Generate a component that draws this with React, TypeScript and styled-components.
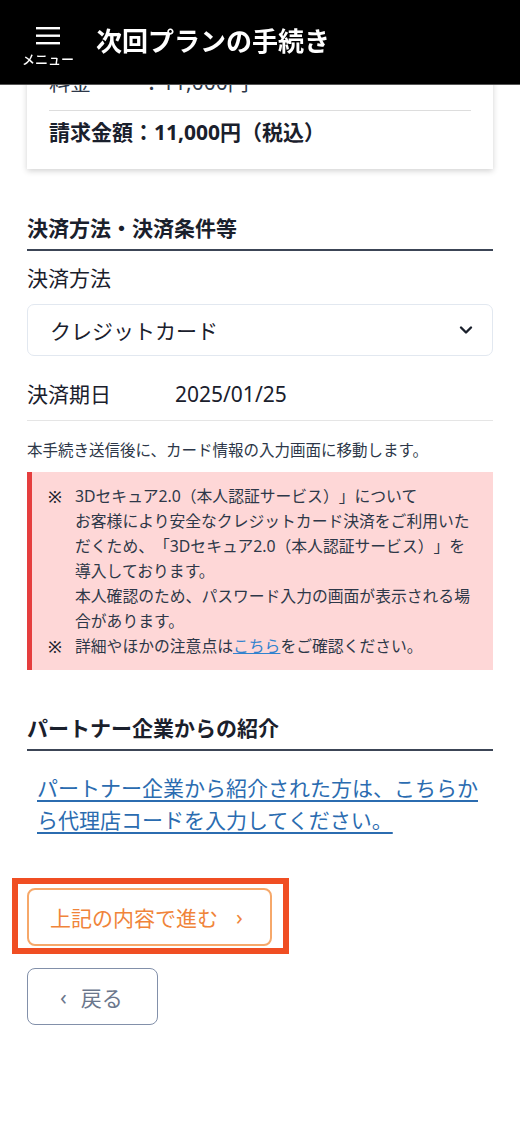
import React from "react";
import styled, { createGlobalStyle } from "styled-components";

const GlobalStyle = createGlobalStyle`
    * {
        box-sizing: border-box;
    }
    body {
        margin: 0;
        background: #ffffff;
        color: #1a202c;
        font-family: "Noto Sans", "Noto Sans CJK JP", sans-serif;
        text-spacing-trim: space-all;
    }
`;

const MenuIcon = () => (
    <svg width="26" height="18" viewBox="0 0 26 18" fill="none">
        <rect x="1" y="0" width="24" height="2.4" fill="#ffffff" />
        <rect x="1" y="7.5" width="24" height="2.4" fill="#ffffff" />
        <rect x="1" y="15" width="24" height="2.4" fill="#ffffff" />
    </svg>
);

const ChevronDown = () => (
    <svg width="14" height="10" viewBox="0 0 14 10" fill="none">
        <path d="M2 2.5 L7 7.5 L12 2.5" stroke="#1a202c" strokeWidth="2.4" strokeLinecap="round" strokeLinejoin="round" />
    </svg>
);

const App = () => {
    return (
        <>
            <GlobalStyle />
            <Header>
                <MenuButton>
                    <MenuIcon />
                    <MenuLabel>メニュー</MenuLabel>
                </MenuButton>
                <Title>次回プランの手続き</Title>
            </Header>

            <Main>
                <Card>
                    <PriceRow>
                        <PriceLabel>料金</PriceLabel>
                        <span>：11,000円</span>
                    </PriceRow>
                    <TotalRow>請求金額：11,000円（税込）</TotalRow>
                </Card>

                <SectionHeading gap={43}>決済方法・決済条件等</SectionHeading>
                <FieldLabel>決済方法</FieldLabel>
                <Select>
                    <span>クレジットカード</span>
                    <ChevronDown />
                </Select>
                <DateRow>
                    <DateLabel>決済期日</DateLabel>
                    <span>2025/01/25</span>
                </DateRow>
                <Note>本手続き送信後に、カード情報の入力画面に移動します。</Note>

                <Alert>
                    <Mark>※</Mark>
                    <AlertBody>
                        <p>3Dセキュア2.0（本人認証サービス）」について</p>
                        <p>お客様により安全なクレジットカード決済をご利用いただくため、「3Dセキュア2.0（本人認証サービス）」を導入しております。</p>
                        <p>本人確認のため、パスワード入力の画面が表示される場合があります。</p>
                    </AlertBody>
                    <Mark>※</Mark>
                    <AlertBody>
                        <p>詳細やほかの注意点は<AlertLink href="#">こちら</AlertLink>をご確認ください。</p>
                    </AlertBody>
                </Alert>

                <SectionHeading gap={42}>パートナー企業からの紹介</SectionHeading>
                <PartnerLink href="#">パートナー企業から紹介された方は、こちらから代理店コードを入力してください。</PartnerLink>

                <Highlight>
                    <NextButton>
                        上記の内容で進む<Arrow>›</Arrow>
                    </NextButton>
                </Highlight>
                <BackButton>
                    <Arrow>‹</Arrow>戻る
                </BackButton>
            </Main>
        </>
    );
};

const Header = styled.header`
    position: fixed;
    top: 0;
    left: 0;
    right: 0;
    height: 84px;
    background: #000000;
    display: flex;
    align-items: center;
    padding-left: 22px;
    z-index: 10;
    box-shadow: 0 1px 0 #555;
`;

const MenuButton = styled.div`
    display: flex;
    flex-direction: column;
    align-items: center;
    width: 52px;
    padding-top: 10px;
`;

const MenuLabel = styled.span`
    color: #ffffff;
    font-size: 13px;
    line-height: 16px;
    margin-top: 6px;
    font-weight: 500;
`;

const Title = styled.h1`
    margin: 0 0 0 22px;
    color: #ffffff;
    font-size: 26px;
    font-weight: 700;
    line-height: 34px;
    padding-bottom: 2px;
`;

const Main = styled.main`
    padding: 46px 27px 100px;
    display: flex;
    flex-direction: column;
    align-items: flex-start;
`;

const Card = styled.div`
    align-self: stretch;
    background: #ffffff;
    padding: 18px 22px 22px;
    box-shadow: 0 2px 6px rgba(0, 0, 0, 0.18);
`;

const PriceRow = styled.div`
    display: flex;
    font-size: 21px;
    line-height: 36px;
    padding-bottom: 10px;
    border-bottom: 1px solid #dddddd;
    color: #2d3748;
`;

const PriceLabel = styled.span`
    width: 92px;
`;

const TotalRow = styled.div`
    font-size: 21px;
    font-weight: 700;
    line-height: 30px;
    padding-top: 6px;
    color: #1a202c;
`;

const SectionHeading = styled.h2<{ gap: number }>`
    align-self: stretch;
    margin: ${(p) => p.gap}px 0 0;
    font-size: 21px;
    font-weight: 700;
    line-height: 32px;
    padding-bottom: 5px;
    border-bottom: 2px solid #3c4556;
    color: #1a202c;
`;

const FieldLabel = styled.div`
    margin-top: 11px;
    font-size: 21px;
    line-height: 32px;
`;

const Select = styled.div`
    align-self: stretch;
    margin-top: 10px;
    height: 52px;
    border: 1px solid #e2e8f0;
    border-radius: 7px;
    display: flex;
    align-items: center;
    justify-content: space-between;
    padding: 0 19px 0 22px;
    font-size: 21px;
`;

const DateRow = styled.div`
    align-self: stretch;
    margin-top: 22px;
    display: flex;
    font-size: 21px;
    line-height: 32px;
    padding-bottom: 10px;
    border-bottom: 1px solid #e5e5e5;
`;

const DateLabel = styled.span`
    width: 148px;
`;

const Note = styled.p`
    margin: 17px 0 0;
    font-size: 15.5px;
    line-height: 24px;
    color: #2d3748;
`;

const Alert = styled.div`
    align-self: stretch;
    margin-top: 10px;
    background: #fed7d7;
    border-left: 5px solid #e53e3e;
    padding: 12px 14px 11px 16px;
    display: grid;
    grid-template-columns: 27px 1fr;
    font-size: 15.8px;
    line-height: 25px;
    color: #2d3748;
`;

const Mark = styled.span`
    font-size: 16.5px;
    font-weight: 500;
    color: #1a202c;
`;

const AlertBody = styled.div`
    p {
        margin: 0;
    }
`;

const AlertLink = styled.a`
    color: #3182ce;
    text-decoration: underline;
`;

const PartnerLink = styled.a`
    margin-top: 21px;
    padding: 0 10px;
    font-size: 21px;
    line-height: 32px;
    color: #2b6cb0;
    text-decoration: underline;
    text-underline-offset: 4px;
`;

const Highlight = styled.div`
    margin: 42px 0 0 -15px;
    border: 6px solid #f04e23;
    padding: 4px 11px 2px 9px;
`;

const BaseButton = styled.button`
    height: 58px;
    background: #ffffff;
    border-radius: 8px;
    font-family: inherit;
    font-size: 21px;
    display: flex;
    align-items: center;
    cursor: pointer;
`;

const NextButton = styled(BaseButton)`
    width: 245px;
    border: 2px solid #f6a86a;
    color: #f0843a;
    padding: 0 0 0 21px;
`;

const BackButton = styled(BaseButton)`
    margin-top: 14px;
    width: 131px;
    height: 57px;
    border: 1.5px solid #8290aa;
    color: #6b778c;
    padding: 0 0 0 32px;
`;

const Arrow = styled.span`
    font-size: 22px;
    margin: 0 16px 2px 18px;
    ${BackButton} & {
        margin: 0 14px 2px 0;
    }
`;

export default App;
